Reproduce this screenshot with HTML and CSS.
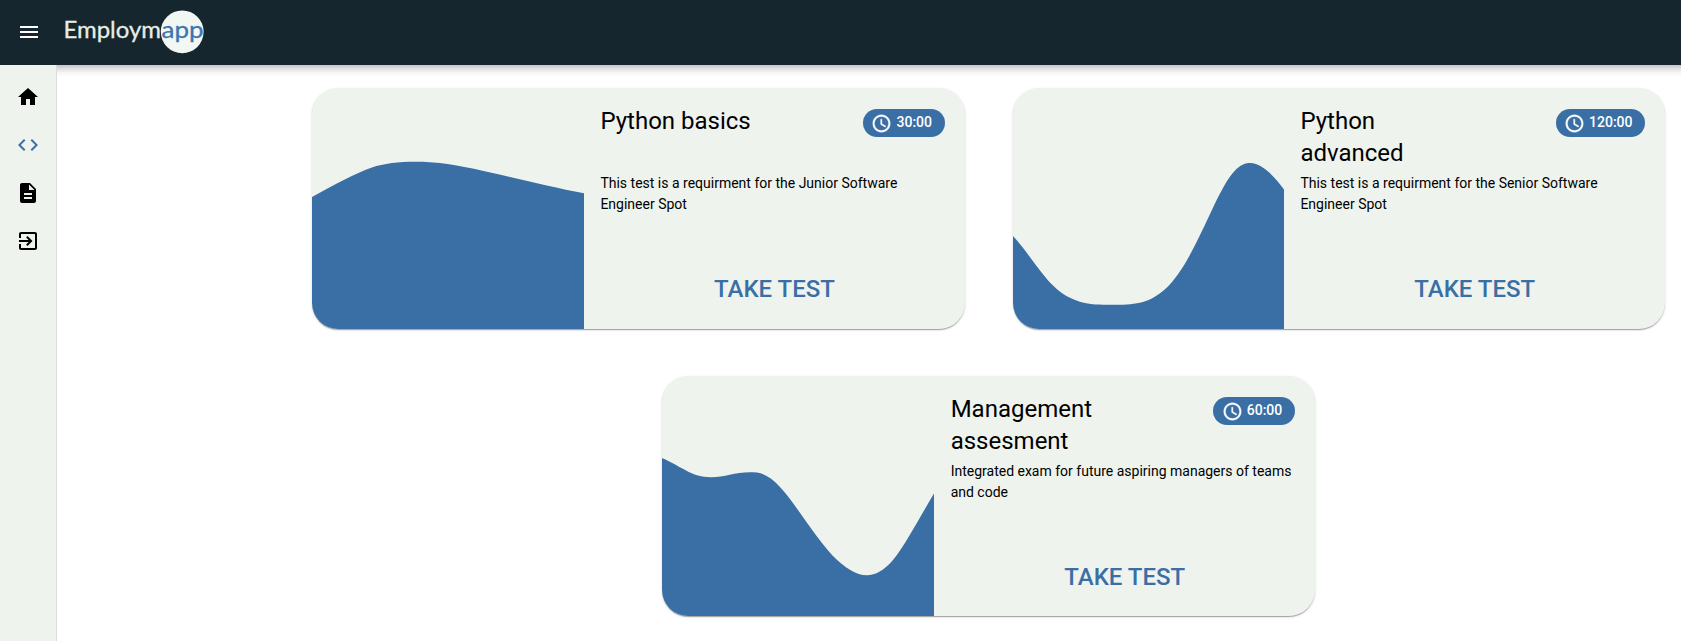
FILE: index.html
```html
<!DOCTYPE html>
<html lang="en">
<head>
<meta charset="utf-8">
<title>Employmapp</title>
<link rel="stylesheet" href="styles.css">
</head>
<body>
<header class="topbar">
  <svg class="icon menu" viewBox="0 0 24 24"><path d="M3 18h18v-2H3v2zm0-5h18v-2H3v2zm0-7v2h18V6H3z"/></svg>
  <svg class="logo" viewBox="0 0 144 44" role="img" aria-label="Employmapp">
    <circle class="logo-disc" cx="121.200" cy="21.800" r="21.400"/>
    <text class="logo-name" x="2.500" y="28" textLength="97.500" lengthAdjust="spacingAndGlyphs">Employm</text>
    <text class="logo-app" x="100.500" y="28" textLength="42" lengthAdjust="spacingAndGlyphs">app</text>
  </svg>
</header>
<div class="body">
  <nav class="sidenav">
    <svg class="icon" viewBox="0 0 24 24"><path d="M10 20v-6h4v6h5v-8h3L12 3 2 12h3v8z"/></svg>
    <svg class="icon active" viewBox="0 0 24 24"><path d="M9.4 16.6L4.8 12l4.6-4.6L8 6l-6 6 6 6 1.4-1.4zm5.2 0l4.6-4.6-4.6-4.6L16 6l6 6-6 6-1.4-1.4z"/></svg>
    <svg class="icon" viewBox="0 0 24 24"><path d="M14 2H6c-1.1 0-1.99.9-1.99 2L4 20c0 1.1.89 2 1.99 2H18c1.1 0 2-.9 2-2V8l-6-6zm2 16H8v-2h8v2zm0-4H8v-2h8v2zm-3-5V3.5L18.5 9H13z"/></svg>
    <svg class="icon" viewBox="0 0 24 24"><path d="M10.09 15.59L11.5 17l5-5-5-5-1.41 1.41L12.67 11H3v2h9.67l-2.58 2.59zM19 3H5c-1.11 0-2 .9-2 2v4h2V5h14v14H5v-4H3v4c0 1.1.89 2 2 2h14c1.1 0 2-.9 2-2V5c0-1.1-.9-2-2-2z"/></svg>
  </nav>
  <main class="content">
    <article class="card tall">
      <svg class="art" viewBox="0 0 272 241" preserveAspectRatio="none"><path d="M0 109C22 97 44 85 60 79.500C78 73 108 72.500 132 75.500C166 80 226 96.500 272 105.300V241H0Z"/></svg>
      <div class="info">
        <div class="head">
          <h2 class="title">Python basics</h2>
          <span class="pill"><svg class="clock" viewBox="0 0 24 24"><path d="M11.990 2C6.470 2 2 6.480 2 12s4.470 10 9.990 10C17.520 22 22 17.520 22 12S17.520 2 11.990 2zM12 20c-4.420 0-8-3.580-8-8s3.580-8 8-8 8 3.580 8 8-3.580 8-8 8zm.5-13H11v6l5.250 3.150.75-1.230-4.500-2.670z"/></svg><span class="time">30:00</span></span>
        </div>
        <p class="desc">This test is a requirment for the Junior Software Engineer Spot</p>
        <button class="take">TAKE TEST</button>
      </div>
    </article>
    <article class="card tall">
      <svg class="art narrow" viewBox="0 0 272 241" preserveAspectRatio="none"><path d="M0 148C13 162 26 183 38 195.500C55 213 72 216.500 90 216.700C122 217.500 135 216 152 201.500C182 175 202 104 222 83C231 73.500 240 72.500 251 80C258 84.500 266 94 272 102.300V241H0Z"/></svg>
      <div class="info">
        <div class="head">
          <h2 class="title">Python advanced</h2>
          <span class="pill"><svg class="clock" viewBox="0 0 24 24"><path d="M11.990 2C6.470 2 2 6.480 2 12s4.470 10 9.990 10C17.520 22 22 17.520 22 12S17.520 2 11.990 2zM12 20c-4.420 0-8-3.580-8-8s3.580-8 8-8 8 3.580 8 8-3.580 8-8 8zm.5-13H11v6l5.250 3.150.75-1.230-4.500-2.670z"/></svg><span class="time">120:00</span></span>
        </div>
        <p class="desc">This test is a requirment for the Senior Software Engineer Spot</p>
        <button class="take">TAKE TEST</button>
      </div>
    </article>
    <article class="card">
      <svg class="art" viewBox="0 0 272 240" preserveAspectRatio="none"><path d="M0 82C10 86 25 96 34 99C58 106 70 94 95 96.500C120 100 138 143 170 179C194 203 211 207 231 184C244 168 259 139 272 117.500V240H0Z"/></svg>
      <div class="info">
        <div class="head">
          <h2 class="title">Management assesment</h2>
          <span class="pill"><svg class="clock" viewBox="0 0 24 24"><path d="M11.990 2C6.470 2 2 6.480 2 12s4.470 10 9.990 10C17.520 22 22 17.520 22 12S17.520 2 11.990 2zM12 20c-4.420 0-8-3.580-8-8s3.580-8 8-8 8 3.580 8 8-3.580 8-8 8zm.5-13H11v6l5.250 3.150.75-1.230-4.500-2.670z"/></svg><span class="time">60:00</span></span>
        </div>
        <p class="desc">Integrated exam for future aspiring managers of teams and code</p>
        <button class="take">TAKE TEST</button>
      </div>
    </article>
  </main>
</div>
</body>
</html>
```
FILE: styles.css
```css
* { box-sizing: border-box; }
body {
  margin: 0;
  height: 100vh;
  overflow: hidden;
  display: flex;
  flex-direction: column;
  background: #fff;
  color: #000;
  font-family: Roboto, "Liberation Sans", sans-serif;
}
.topbar {
  flex: none;
  display: flex;
  align-items: center;
  height: 65px;
  padding: 0 17px 1px;
  background: #16262e;
}
.icon { width: 24px; height: 24px; fill: #000; }
.menu { fill: #fff; }
.logo { width: 144px; height: 44px; margin-left: 20px; }
.logo-disc { fill: #f3f7f3; }
.logo-name, .logo-app { font-family: Lato, sans-serif; font-size: 23.5px; stroke-width: .3; }
.logo-name { fill: #e8ede6; stroke: #e8ede6; }
.logo-app { fill: #3a76ae; stroke: #3a76ae; }
.body { flex: 1; display: flex; min-height: 0; }
.sidenav {
  flex: none;
  width: 57px;
  padding: 20px 16px;
  display: flex;
  flex-direction: column;
  gap: 24px;
  background: #eef3ed;
  border-right: 1px solid #dadddb;
}
.active { fill: #3a6fa6; }
.content {
  flex: 1;
  display: flex;
  flex-wrap: wrap;
  justify-content: center;
  align-content: flex-start;
  gap: 47px 48px;
  padding: 23px 16px 0 255px;
  background: linear-gradient(#c4c4c4, #e2e2e2 4px, #f7f7f7 8px, #fff 12px);
}
.card {
  flex: none;
  display: flex;
  width: 652.5px;
  height: 240px;
  overflow: hidden;
  border-radius: 26px;
  background: #eef3ed;
  box-shadow: 0 2px 1px -1px rgba(0,0,0,.2), 0 1px 1px rgba(0,0,0,.14), 0 1px 3px rgba(0,0,0,.12);
}
.tall { height: 241px; }
.art { flex: none; width: 272px; height: 100%; fill: #3a6fa6; }
.narrow { width: 271.5px; }
.info { flex: 1; display: flex; flex-direction: column; padding: 17px 20px 0 16.4px; }
.head { display: flex; justify-content: space-between; align-items: flex-start; height: 68px; }
.title { margin: 0; width: 160px; font-size: 24px; font-weight: 400; line-height: 32px; }
.pill {
  display: flex;
  align-items: center;
  gap: 4px;
  height: 28px;
  margin-top: 4px;
  padding: 0 12.5px 0 8.5px;
  border-radius: 14px;
  background: #3a6fa6;
  color: #fff;
  font-size: 14px;
  font-weight: 500;
}
.time { line-height: 24px; padding-bottom: 2px; }
.clock { width: 21px; height: 21px; margin-top: 1px; fill: #fff; stroke: #fff; stroke-width: .4; }
.desc { margin: 0; height: 88px; font-size: 14px; line-height: 21px; }
.take {
  align-self: center;
  margin-left: 4px;
  padding: 0;
  border: 0;
  background: none;
  color: #3a6fa6;
  font: 500 24px/56px Roboto, sans-serif;
}
```
